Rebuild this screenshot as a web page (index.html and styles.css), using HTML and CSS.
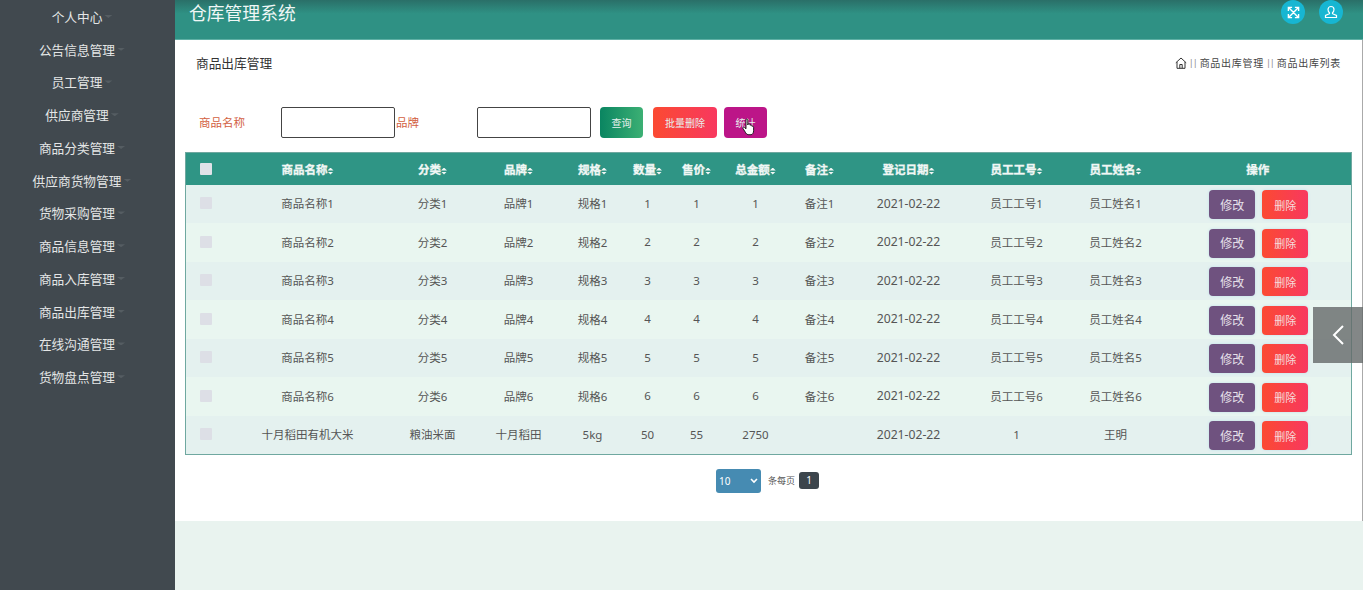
FILE: index.html
```html
<!DOCTYPE html>
<html lang="zh-CN">
<head>
    <meta charset="UTF-8">
    <title>仓库管理系统</title>
    <link rel="stylesheet" href="styles.css">
</head>
<body>
    <aside class="sidebar">
        <ul class="menu">
            <li><span>个人中心</span><i class="caret"></i></li>
            <li><span>公告信息管理</span><i class="caret"></i></li>
            <li><span>员工管理</span><i class="caret"></i></li>
            <li><span>供应商管理</span><i class="caret"></i></li>
            <li><span>商品分类管理</span><i class="caret"></i></li>
            <li><span>供应商货物管理</span><i class="caret"></i></li>
            <li><span>货物采购管理</span><i class="caret"></i></li>
            <li><span>商品信息管理</span><i class="caret"></i></li>
            <li><span>商品入库管理</span><i class="caret"></i></li>
            <li><span>商品出库管理</span><i class="caret"></i></li>
            <li><span>在线沟通管理</span><i class="caret"></i></li>
            <li><span>货物盘点管理</span><i class="caret"></i></li>
        </ul>
    </aside>

    <div class="main">
        <header class="topbar">
            <h1>仓库管理系统</h1>
            <div class="top-icons">
                <span class="round-btn">
                    <svg width="13" height="13" viewBox="0 0 14 14" fill="none" stroke="#fff" stroke-width="1.500"><path d="M2 2l10 10M12 2L2 12M1.500 5.500v-4h4M8.500 1.500h4v4M1.500 8.500v4h4M12.500 8.500v4h-4"/></svg>
                </span>
                <span class="round-btn">
                    <svg width="14" height="14" viewBox="0 0 14 14" fill="none" stroke="#fff" stroke-width="1.200"><path d="M7 1.500a3 3 0 0 1 3 3c0 1.500-.8 2.600-1.500 3.200v1L12.500 10.500v2h-11v-2L5.500 8.700v-1C4.800 7.100 4 6 4 4.500a3 3 0 0 1 3-3z"/></svg>
                </span>
            </div>
        </header>

        <section class="panel">
            <div class="title-row">
                <span class="page-title">商品出库管理</span>
                <div class="crumbs">
                    <svg width="12" height="12" viewBox="0 0 12 12" fill="none" stroke="#333" stroke-width="1"><path d="M.8 5.800L6 1l5.200 4.800M2 5v6.300h8V5M4.800 11.300V7.500h2.400v3.800"/></svg>
                    <span class="sep">||</span><span>商品出库管理</span><span class="sep">||</span><span>商品出库列表</span>
                </div>
            </div>

            <div class="search-row">
                <label class="label-first">商品名称</label>
                <input class="search-input" type="text">
                <label class="label-second">品牌</label>
                <input class="search-input" type="text">
                <button class="btn btn-search">查询</button>
                <button class="btn btn-batch">批量删除</button>
                <button class="btn btn-stat">统计</button>
                <svg class="hand" width="14" height="18" viewBox="0 0 14 18"><path d="M4 1.500c.8-.8 1.800-.3 1.800.7V7l.3-1c.7-.8 1.700-.3 1.800.500l.2.800c.7-.7 1.700-.3 1.800.6l.1.500c.7-.5 1.600-.1 1.600.8v3.500c0 2-1 3.800-2.500 4H6c-1.200-.2-1.800-1-2.300-1.900L1 10.500c-.5-1 .7-1.900 1.500-1.100L4 10.800V2z" fill="#fff" stroke="#111" stroke-width=".9"/></svg>
            </div>

            <table class="data-table">
                <colgroup>
                    <col class="c-check"><col class="c-name"><col class="c-cat"><col class="c-brand"><col class="c-spec"><col class="c-qty"><col class="c-price"><col class="c-total"><col class="c-note"><col class="c-date"><col class="c-no"><col class="c-staff"><col>
                </colgroup>
                <thead>
                    <tr>
                        <th><i class="check check-head"></i></th>
                        <th>商品名称<b class="sort"></b></th>
                        <th>分类<b class="sort"></b></th>
                        <th>品牌<b class="sort"></b></th>
                        <th>规格<b class="sort"></b></th>
                        <th>数量<b class="sort"></b></th>
                        <th>售价<b class="sort"></b></th>
                        <th>总金额<b class="sort"></b></th>
                        <th>备注<b class="sort"></b></th>
                        <th>登记日期<b class="sort"></b></th>
                        <th>员工工号<b class="sort"></b></th>
                        <th>员工姓名<b class="sort"></b></th>
                        <th>操作</th>
                    </tr>
                </thead>
                <tbody>
                    <tr><td><i class="check"></i></td><td>商品名称1</td><td>分类1</td><td>品牌1</td><td>规格1</td><td>1</td><td>1</td><td>1</td><td>备注1</td><td class="date">2021-02-22</td><td>员工工号1</td><td>员工姓名1</td><td class="ops"><button class="op-edit">修改</button><button class="op-del">删除</button></td></tr>
                    <tr><td><i class="check"></i></td><td>商品名称2</td><td>分类2</td><td>品牌2</td><td>规格2</td><td>2</td><td>2</td><td>2</td><td>备注2</td><td class="date">2021-02-22</td><td>员工工号2</td><td>员工姓名2</td><td class="ops"><button class="op-edit">修改</button><button class="op-del">删除</button></td></tr>
                    <tr><td><i class="check"></i></td><td>商品名称3</td><td>分类3</td><td>品牌3</td><td>规格3</td><td>3</td><td>3</td><td>3</td><td>备注3</td><td class="date">2021-02-22</td><td>员工工号3</td><td>员工姓名3</td><td class="ops"><button class="op-edit">修改</button><button class="op-del">删除</button></td></tr>
                    <tr><td><i class="check"></i></td><td>商品名称4</td><td>分类4</td><td>品牌4</td><td>规格4</td><td>4</td><td>4</td><td>4</td><td>备注4</td><td class="date">2021-02-22</td><td>员工工号4</td><td>员工姓名4</td><td class="ops"><button class="op-edit">修改</button><button class="op-del">删除</button></td></tr>
                    <tr><td><i class="check"></i></td><td>商品名称5</td><td>分类5</td><td>品牌5</td><td>规格5</td><td>5</td><td>5</td><td>5</td><td>备注5</td><td class="date">2021-02-22</td><td>员工工号5</td><td>员工姓名5</td><td class="ops"><button class="op-edit">修改</button><button class="op-del">删除</button></td></tr>
                    <tr><td><i class="check"></i></td><td>商品名称6</td><td>分类6</td><td>品牌6</td><td>规格6</td><td>6</td><td>6</td><td>6</td><td>备注6</td><td class="date">2021-02-22</td><td>员工工号6</td><td>员工姓名6</td><td class="ops"><button class="op-edit">修改</button><button class="op-del">删除</button></td></tr>
                    <tr><td><i class="check"></i></td><td>十月稻田有机大米</td><td>粮油米面</td><td>十月稻田</td><td>5kg</td><td>50</td><td>55</td><td>2750</td><td></td><td class="date">2021-02-22</td><td>1</td><td>王明</td><td class="ops"><button class="op-edit">修改</button><button class="op-del">删除</button></td></tr>
                </tbody>
            </table>

            <div class="pager">
                <span class="select-wrap">
                    <select class="page-size"><option>10</option></select>
                    <svg class="select-arrow" width="8" height="6" viewBox="0 0 8 6" fill="none" stroke="#fff" stroke-width="1.600"><path d="M1 1l3 3 3-3"/></svg>
                </span>
                <span class="per-page">条每页</span>
                <span class="page-num">1</span>
            </div>
        </section>
    </div>

    <div class="side-toggle">
        <svg width="14" height="24" viewBox="0 0 14 24" fill="none" stroke="#fff" stroke-width="2"><path d="M12 3L3 12l9 9"/></svg>
    </div>
</body>
</html>
```

FILE: styles.css
```css
* {
    box-sizing: border-box;
}

html, body {
    height: 590px;
    overflow: hidden;
}

body {
    display: flex;
    margin: 0;
    font-family: "Noto Sans", "Noto Sans CJK SC", sans-serif;
    font-size: 12px;
    color: #555;
    background-color: #e9f3ef;
}

/* 左侧菜单 */
.sidebar {
    width: 175px;
    flex-shrink: 0;
    background-color: #41494f;
}

.menu {
    list-style: none;
    margin: 0;
    padding: 0 11px 0 0;
}

.menu li {
    display: flex;
    justify-content: center;
    align-items: center;
    height: 32.750px;
    font-size: 12.700px;
    color: #e4e6e6;
}

.caret {
    width: 8px;
    height: 3px;
    margin-left: 2px;
    background-color: #555d62;
    clip-path: polygon(0 0, 100% 0, 50% 100%);
}

/* 顶部 */
.main {
    flex: 1;
    min-width: 0;
}

.topbar {
    display: flex;
    justify-content: space-between;
    height: 40px;
    padding: 0 20px 0 14px;
    background: linear-gradient(180deg, #2a6f68 0%, #2f9184 35%, #2f9184 100%);
    border-bottom: 1px solid #5fb0a5;
}

.topbar h1 {
    margin: 0;
    font-size: 17.800px;
    font-weight: 400;
    line-height: 26px;
    color: #f0f7f6;
}

.top-icons {
    display: flex;
    gap: 14px;
}

.round-btn {
    display: flex;
    justify-content: center;
    align-items: center;
    width: 24px;
    height: 24px;
    border-radius: 50%;
    background-color: #17b6d2;
}

/* 内容区 */
.panel {
    height: 481px;
    padding: 0 10px;
    background-color: #fff;
    border-right: 1px solid #aaa;
}

.title-row {
    display: flex;
    justify-content: space-between;
    align-items: center;
    height: 45px;
    padding: 0 11px;
}

.page-title {
    font-size: 12.700px;
    color: #333;
}

.crumbs {
    display: flex;
    align-items: center;
    font-size: 10px;
    letter-spacing: .7px;
    color: #444;
}

.sep {
    margin: 0 3px 0 2px;
    font-size: 9px;
    letter-spacing: -1px;
    color: #888;
}

.search-row {
    position: relative;
    display: flex;
    align-items: center;
    height: 34px;
    margin-top: 20px;
}

.search-row label {
    color: #d2603f;
    font-size: 11.500px;
}

.label-first {
    width: 96px;
    padding-left: 14px;
}

.label-second {
    width: 82px;
    padding-left: 1px;
}

.search-input {
    width: 114px;
    height: 31px;
    margin: 0;
    background-color: #fff;
    border: 1px solid #444;
    border-radius: 2px;
}

.btn {
    height: 31px;
    border: none;
    border-radius: 4px;
    font-family: inherit;
    font-size: 10px;
    color: #e8f0ee;
}

.btn-search {
    width: 43px;
    margin-left: 9px;
    background: linear-gradient(90deg, #0a8561, #3cb074);
}

.btn-batch {
    width: 64px;
    margin-left: 10px;
    background: linear-gradient(90deg, #fb4a32, #f8385f);
}

.btn-stat {
    width: 43px;
    margin-left: 7px;
    background-color: #bc1588;
}

.hand {
    position: absolute;
    left: 557px;
    top: 13px;
}

/* 表格 */
.data-table {
    width: 1167px;
    margin-top: 13px;
    border-collapse: collapse;
    table-layout: fixed;
    border: 1px solid #6fa8a0;
}

.c-check { width: 41px; }
.c-name { width: 162px; }
.c-cat { width: 88px; }
.c-brand { width: 84px; }
.c-spec { width: 64px; }
.c-qty { width: 46px; }
.c-price { width: 52px; }
.c-total { width: 66px; }
.c-note { width: 62px; }
.c-date { width: 116px; }
.c-no { width: 100px; }
.c-staff { width: 98px; }

.data-table th {
    height: 32px;
    padding: 0;
    background-color: #2f9585;
    color: #f1f7f5;
    font-family: "Liberation Serif", "Noto Sans CJK SC", serif;
    font-size: 11.500px;
    font-weight: 700;
    text-align: center;
    -webkit-text-stroke: .3px #f1f7f5;
}

.data-table td {
    height: 38.500px;
    padding: 0 0 1px;
    font-size: 11.500px;
    text-align: center;
    color: #555;
}

.data-table td.date {
    font-size: 12.200px;
}

.data-table tbody tr:nth-child(odd) {
    background-color: #e4f1ef;
}

.data-table tbody tr:nth-child(even) {
    background-color: #e9f6f0;
}

.sort {
    display: inline-flex;
    flex-direction: column;
    gap: 1px;
    width: 6px;
    vertical-align: middle;
}

.sort::before,
.sort::after {
    content: "";
    width: 6px;
    height: 3px;
    background-color: #f1f7f5;
}

.sort::before {
    clip-path: polygon(50% 0, 100% 100%, 0 100%);
}

.sort::after {
    clip-path: polygon(0 0, 100% 0, 50% 100%);
}

.check {
    display: block;
    width: 12px;
    height: 12px;
    margin: 0 auto;
    border-radius: 1px;
    background-color: #dddfe6;
}

.check-head {
    background-color: #e0e2e8;
}

.data-table td.ops {
    padding: 0 0 0 2px;
    font-size: 0;
}

.ops button {
    width: 46px;
    height: 29px;
    margin-top: 2px;
    border: none;
    border-radius: 4px;
    font-family: inherit;
    vertical-align: middle;
    box-shadow: 0 0 3px #bfe0ec;
}

.ops .op-edit {
    margin-right: 7px;
    background-color: #6f527f;
    color: #e6e0ea;
    font-size: 12px;
}

.op-del {
    background: linear-gradient(90deg, #fb4a32, #f8385f);
    color: #f5dcdc;
    font-size: 11px;
}

/* 分页 */
.pager {
    display: flex;
    justify-content: center;
    align-items: center;
    height: 24px;
    margin-top: 14px;
    padding-right: 2px;
}

.select-wrap {
    position: relative;
    display: flex;
}

.page-size {
    appearance: none;
    width: 45px;
    height: 24px;
    padding: 0 0 0 3px;
    border: none;
    border-radius: 3px;
    background-color: #468bb2;
    color: #fff;
    font-family: inherit;
    font-size: 10px;
}

.select-arrow {
    position: absolute;
    right: 3px;
    top: 9px;
}

.per-page {
    margin: 0 4px 0 7px;
    font-size: 9px;
    color: #555;
}

.page-num {
    width: 20px;
    height: 17px;
    border-radius: 3px;
    background-color: #3c454c;
    color: #fff;
    font-size: 10px;
    line-height: 17px;
    text-align: center;
}

/* 右侧浮动按钮 */
.side-toggle {
    position: absolute;
    right: 0;
    top: 307px;
    display: flex;
    justify-content: center;
    align-items: center;
    width: 50px;
    height: 56px;
    background-color: rgba(100, 105, 105, .8);
}
```
